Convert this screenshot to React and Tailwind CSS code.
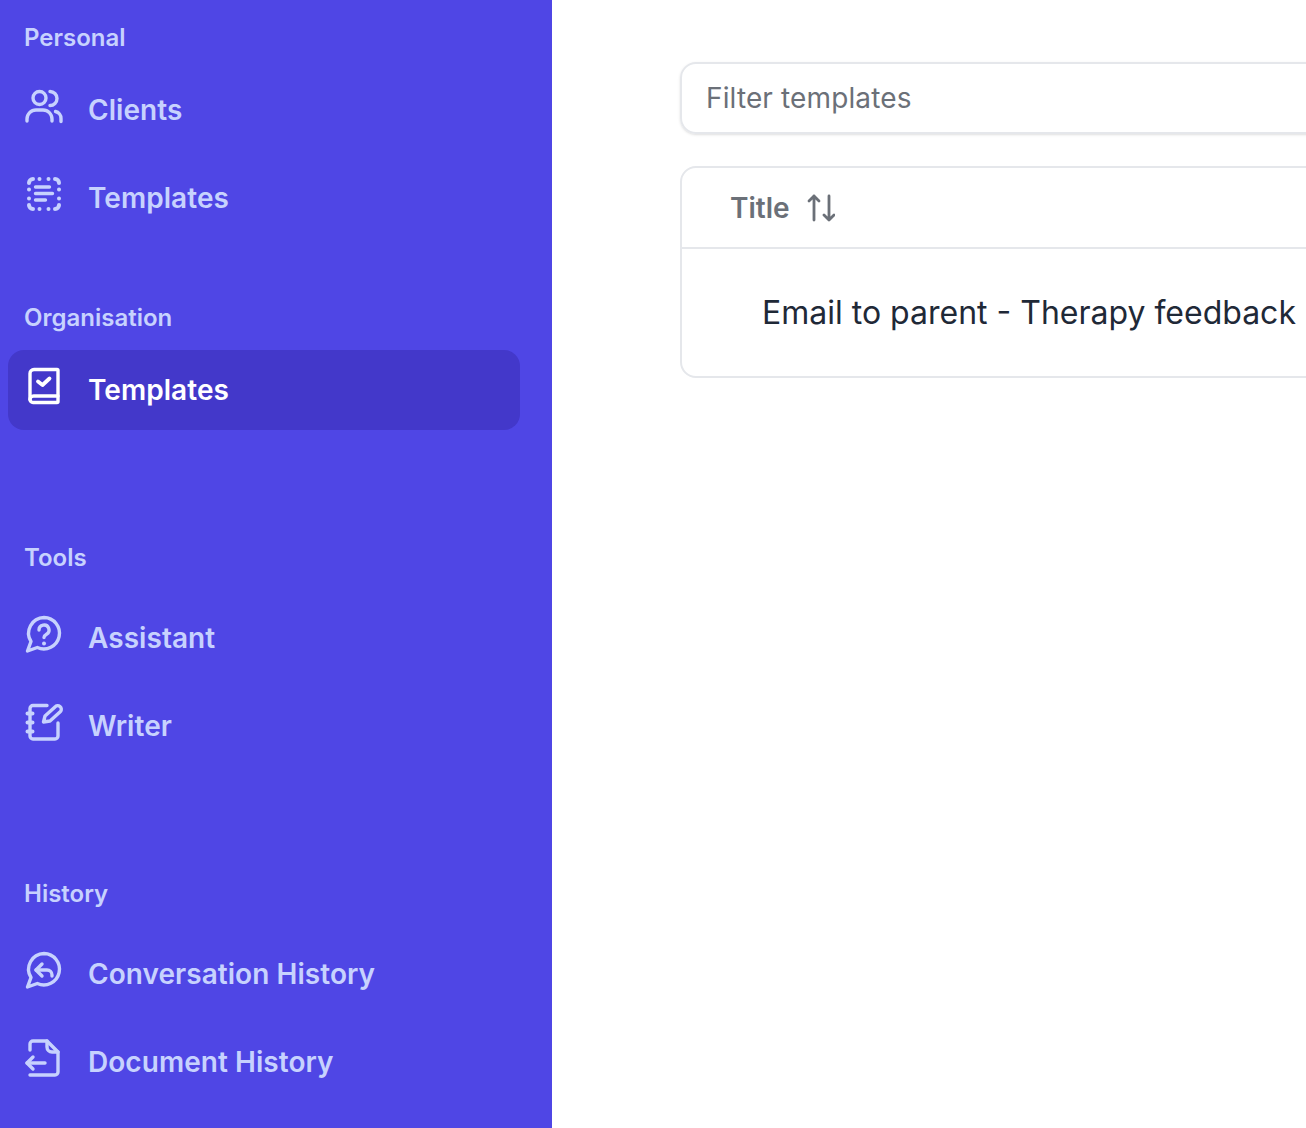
const ClientsIcon = () => (
  <svg width="40" height="40" viewBox="0 0 40 40" fill="none" stroke="currentColor" strokeWidth="3.400" strokeLinecap="round" strokeLinejoin="round">
    <circle cx="15.5" cy="12" r="6.500" />
    <path d="M26 5.500a7 7 0 0 1 0 14" />
    <path d="M3 35v-2a9 9 0 0 1 9-9h7a9 9 0 0 1 9 9v2" />
    <path d="M31.500 25.500a7 7 0 0 1 5.500 7v3" />
  </svg>
);

const DashedListIcon = () => (
  <svg width="40" height="40" viewBox="0 0 40 40" fill="none" stroke="currentColor" strokeLinecap="round" strokeLinejoin="round">
    <g strokeWidth="4">
      <path d="M5 9a4 4 0 0 1 4-4" />
      <path d="M31 5a4 4 0 0 1 4 4" />
      <path d="M35 31a4 4 0 0 1-4 4" />
      <path d="M9 35a4 4 0 0 1-4-4" />
      <path d="M15.500 5h.01M24.500 5h.01M15.500 35h.01M24.500 35h.01M5 15.500h.01M5 24.500h.01M35 15.500h.01M35 24.500h.01" />
    </g>
    <path d="M11.500 13h14M11.500 19.500h17M11.500 26h10" strokeWidth="3.400" />
  </svg>
);

const BookCheckIcon = () => (
  <svg width="40" height="40" viewBox="0 0 40 40" fill="none" stroke="currentColor" strokeWidth="3.400" strokeLinecap="round" strokeLinejoin="round">
    <path d="M10 3.500h23a1 1 0 0 1 1 1v31a1 1 0 0 1-1 1H9a3 3 0 0 1-3-3V7.500a4 4 0 0 1 4-4z" />
    <path d="M6 33.500a3.500 3.500 0 0 1 3.500-3.500H34" />
    <path d="M14 15.500l4.500 3.500 7-6.500" strokeWidth="3.800" />
  </svg>
);

const bubble = 'M20 3.500a15.700 15.700 0 1 1-6.700 30l-9.800 3.500 3.500-9.500A15.700 15.700 0 0 1 20 3.500z';

const QuestionIcon = () => (
  <svg width="40" height="40" viewBox="0 0 40 40" fill="none" stroke="currentColor" strokeWidth="3.400" strokeLinecap="round" strokeLinejoin="round">
    <path d={bubble} />
    <path d="M15 16a5 5 0 1 1 7.500 4.300c-1.500.9-2.500 1.700-2.500 3.200" />
    <path d="M20 29.500h.01" strokeWidth="4" />
  </svg>
);

const NotebookPenIcon = () => (
  <svg width="40" height="40" viewBox="0 0 40 40" fill="none" stroke="currentColor" strokeWidth="3.400" strokeLinecap="round" strokeLinejoin="round">
    <path d="M23 3.500H9a3 3 0 0 0-3 3v27.500a3 3 0 0 0 3 3h22a3 3 0 0 0 3-3V21" />
    <path d="M3.500 11.500h5M3.500 20.500h5M3.500 29.500h5" strokeWidth="4" />
    <path d="M19.500 20l1.500-6L31 5a3.500 3.500 0 0 1 5.500 4.500L26 19z" />
  </svg>
);

const ReplyBubbleIcon = () => (
  <svg width="40" height="40" viewBox="0 0 40 40" fill="none" stroke="currentColor" strokeWidth="3.400" strokeLinecap="round" strokeLinejoin="round">
    <path d={bubble} />
    <path d="M18 14l-6 6 6 6" />
    <path d="M12 20h11a5 5 0 0 1 5 5v1" />
  </svg>
);

const FileBackIcon = () => (
  <svg width="40" height="40" viewBox="0 0 40 40" fill="none" stroke="currentColor" strokeWidth="3.400" strokeLinecap="round" strokeLinejoin="round">
    <path d="M6 12V6a3 3 0 0 1 3-3h14l11 11v20a3 3 0 0 1-3 3H6" />
    <path d="M23 3v6a5 5 0 0 0 5 5h6" />
    <path d="M21 25H3" />
    <path d="M9 19l-6 6 6 6" />
  </svg>
);

const SortIcon = () => (
  <svg width="28" height="28" viewBox="0 0 28 28" fill="none" stroke="currentColor" strokeWidth="2.800" strokeLinecap="round" strokeLinejoin="round">
    <path d="M7 26V2M2 7l5-5 5 5" />
    <path d="M22 2v24M17 21l5 5 5-5" />
  </svg>
);

const NavItem = ({ icon: Icon, label, active }) => (
  <a
    href="#"
    className={`flex h-20 items-center gap-6 rounded-2xl px-4 text-[28px] font-semibold tracking-[0.05px] ${
      active ? 'bg-[#4338ca] text-white' : 'text-[#c7d2fe]'
    }`}
  >
    <span className="-mt-2 shrink-0">
      <Icon />
    </span>
    {label}
  </a>
);

const SectionLabel = ({ children, className = '' }) => (
  <h2 className={`h-8 px-4 text-2xl leading-8 font-semibold text-[#c7d2fe] ${className}`}>{children}</h2>
);

export default function App() {
  return (
    <div className="flex h-[1128px] w-[1306px] overflow-hidden bg-white font-['Inter',sans-serif]">
      <aside className="w-[552px] shrink-0 bg-[#4f46e5] pt-[22px] pr-8 pl-2">
        <SectionLabel className="mb-4">Personal</SectionLabel>
        <nav className="flex flex-col gap-2">
          <NavItem icon={ClientsIcon} label="Clients" />
          <NavItem icon={DashedListIcon} label="Templates" />
        </nav>

        <SectionLabel className="mt-16 mb-4">Organisation</SectionLabel>
        <nav className="flex flex-col gap-2">
          <NavItem icon={BookCheckIcon} label="Templates" active />
        </nav>

        <SectionLabel className="mt-28 mb-6">Tools</SectionLabel>
        <nav className="flex flex-col gap-2">
          <NavItem icon={QuestionIcon} label="Assistant" />
          <NavItem icon={NotebookPenIcon} label="Writer" />
        </nav>

        <SectionLabel className="mt-28 mb-6">History</SectionLabel>
        <nav className="flex flex-col gap-2">
          <NavItem icon={ReplyBubbleIcon} label="Conversation History" />
          <NavItem icon={FileBackIcon} label="Document History" />
        </nav>
      </aside>

      <main className="shrink-0 pt-[62px] pl-32">
        <input
          type="text"
          placeholder="Filter templates"
          className="block h-[72px] w-[1000px] rounded-2xl border-2 border-[#e5e7eb] px-6 text-[28px] tracking-[0.13px] text-[#111827] shadow-sm outline-none placeholder:text-[#6b7078]"
        />

        <div className="mt-8 w-[1000px] rounded-2xl border-2 border-[#e5e7eb]">
          <div className="flex h-[81px] items-center gap-[17px] border-b-2 border-[#e5e7eb] pl-12 text-[28px] font-semibold text-[#6b7078]">
            Title
            <SortIcon />
          </div>
          <div className="flex h-[127px] items-center pl-20 text-[32px] text-[#1f2937]">
            Email to parent - Therapy feedback
          </div>
        </div>
      </main>
    </div>
  );
}
